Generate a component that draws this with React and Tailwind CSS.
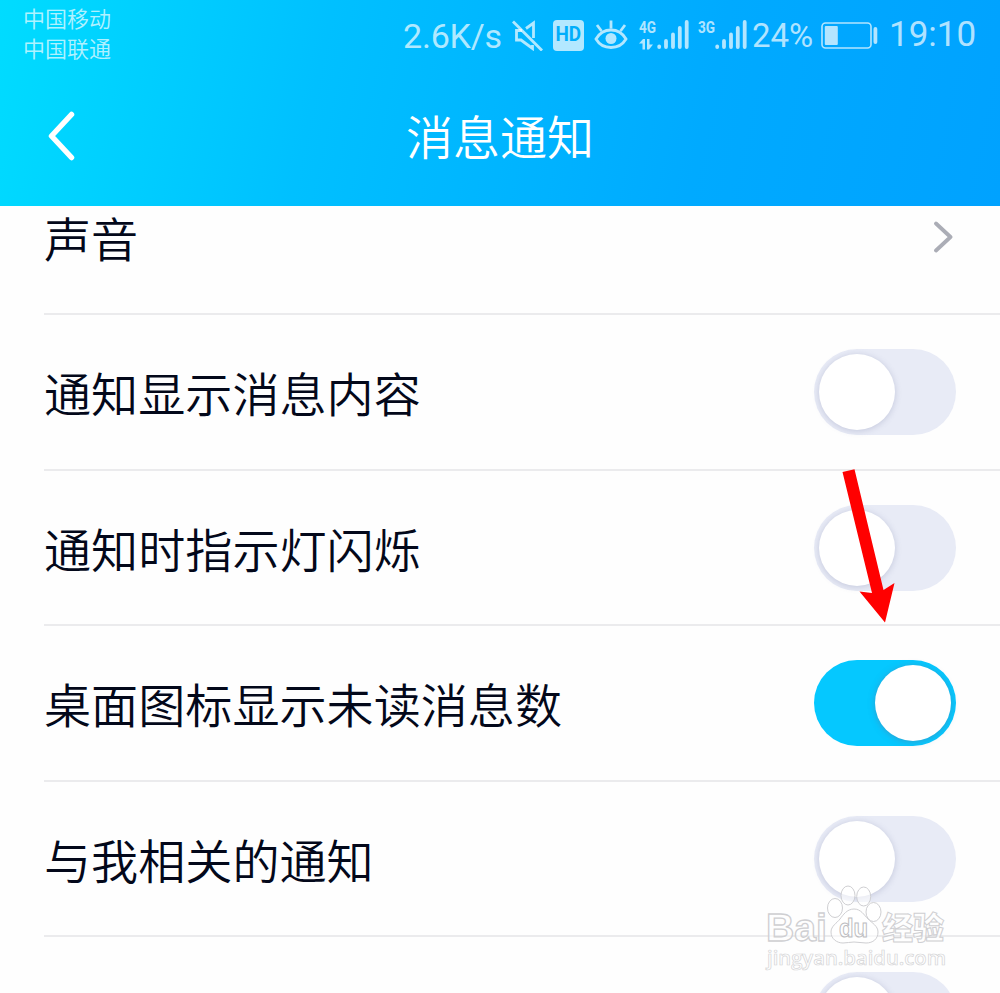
import React, { useState } from 'react';

const CJK = "font-['Noto_Sans_CJK_SC',sans-serif]";

const MutedIcon = () => (
  <svg className="h-8 w-8 shrink-0" viewBox="0 0 32 32" fill="none" stroke="currentColor" strokeWidth="2.8">
    <path d="M11 11.500H5.500V21H10l11.500 8.500V26" />
    <path d="M15 9.500 22.500 4v15" />
    <path d="M2 2.500 31 31.500" />
  </svg>
);

const EyeIcon = () => (
  <svg className="h-8 w-[34px] shrink-0" viewBox="0 0 34 32" fill="none" stroke="currentColor" strokeWidth="2.8">
    <path d="M2 20C5.500 14 11 11 17 11s11.500 3 15 9c-3.500 6-9 8.500-15 8.500s-11.500-2.500-15-8.500Z" />
    <path d="M17 1.500v8M3 6l4.500 6M31 6l-4.500 6" />
    <circle cx="17" cy="19.500" r="5.500" fill="currentColor" stroke="none" />
  </svg>
);

const SignalBars = () => (
  <svg className="h-8 w-8 shrink-0" viewBox="0 0 32 32" fill="none" stroke="currentColor" strokeWidth="3.800" strokeLinecap="round">
    <path d="M2.200 27.500v.6M9 22v6.100M16 15.500v12.600M22.800 9v19.100M29.700 3v25.100" />
  </svg>
);

const DataArrows = () => (
  <svg className="h-3 w-[14px]" viewBox="0 0 14 12" fill="currentColor">
    <path d="M0 4.500 4 0h2V10.500H3.500V4.500ZM8 0h2.500V5.500H14l-4 5H8Z" />
  </svg>
);

const BatteryIcon = () => (
  <svg className="h-[27px] w-[57px] shrink-0" viewBox="0 0 57 27" fill="currentColor">
    <rect x="1" y="1" width="49" height="25" rx="3.500" fill="none" stroke="currentColor" strokeWidth="1.600" />
    <rect x="3.800" y="4" width="13" height="19" rx="1" />
    <rect x="52.500" y="5" width="3.800" height="17" rx="1.900" />
  </svg>
);

const StatusBar = () => (
  <div className="flex h-[72px] items-start text-white/70">
    <div className={`w-[381px] shrink-0 pt-[2px] pl-[23px] text-[22px] leading-[30px] font-[350] ${CJK}`}>
      <div>中国移动</div>
      <div>中国联通</div>
    </div>
    <div className="flex h-[70px] shrink-0 items-center pl-[22px] font-['Roboto',sans-serif] whitespace-nowrap">
      <span className="w-[108px] pt-[2px] text-[34px] tracking-[-0.2px]">2.6K/s</span>
      <MutedIcon />
      <span className="ml-[10px] flex h-[31px] w-[31px] items-center justify-center rounded-[4px] bg-[#b3e8ff] text-[21px] font-bold text-[#00aefb]">
        <span className="scale-x-[0.9]">HD</span>
      </span>
      <span className="ml-[10px] flex"><EyeIcon /></span>
      <span className="ml-[11px] flex h-8 w-[18px] flex-col justify-between">
        <span className="origin-left scale-x-[0.8] text-[17px] leading-[16px] font-bold">4G</span>
        <DataArrows />
      </span>
      <SignalBars />
      <span className="ml-[9px] h-8 w-[17px] origin-left scale-x-[0.8] text-[17px] leading-[16px] font-bold">3G</span>
      <SignalBars />
      <span className="ml-[5px] w-[69px] pt-px text-[33px]">24%</span>
      <BatteryIcon />
      <span className="ml-[11px] pt-px text-[35px]">19:10</span>
    </div>
  </div>
);

const Header = () => (
  <header className="h-[206px] bg-[linear-gradient(102deg,#00dcff_0%,#00c0ff_32%,#00aaff_70%,#00a2ff_100%)]">
    <StatusBar />
    <div className="grid h-[128px] grid-cols-[200px_1fr_200px] items-center text-white">
      <button className="flex pl-12" aria-label="返回">
        <svg className="h-[50px] w-7" viewBox="0 0 28 50" fill="none" stroke="currentColor" strokeWidth="5.500" strokeLinecap="round" strokeLinejoin="round">
          <path d="M23.500 3.500 3.500 25l20 21.500" />
        </svg>
      </button>
      <h1 className={`pb-[3px] text-center text-[47px] leading-none font-[350] ${CJK}`}>消息通知</h1>
    </div>
  </header>
);

const Toggle = ({ on, onClick }) => (
  <button
    role="switch"
    aria-checked={on}
    onClick={onClick}
    className={`mt-px flex h-[86px] w-[142px] shrink-0 items-center rounded-full px-[5px] ${on ? 'justify-end bg-[#05c8ff]' : 'justify-start bg-[#e8ebf6]'}`}
  >
    <span className={`h-[76px] w-[76px] rounded-full bg-white ${on ? 'shadow-[0_1px_6px_rgba(90,120,160,0.5)]' : 'shadow-[0_1px_6px_rgba(110,115,160,0.3)]'}`} />
  </button>
);

const Row = ({ label, children }) => (
  <div className="ml-11 flex h-[155.6px] shrink-0 items-center justify-between border-b-2 border-[#ebebed] pr-11">
    <span className={`text-[47.1px] leading-none font-[350] whitespace-nowrap text-[#03081a] ${CJK}`}>{label}</span>
    {children}
  </div>
);

const Watermark = () => (
  <svg className="pointer-events-none absolute top-[880px] left-[760px] h-[96px] w-[200px]" viewBox="0 0 200 96" fill="#fff" fillOpacity="0.6" stroke="#cfcfd2" strokeWidth="1">
    <g fontFamily="'Liberation Sans',sans-serif" fontWeight="700">
      <text x="6" y="61" fontSize="39" strokeWidth="1.300" textLength="61" lengthAdjust="spacingAndGlyphs">Bai</text>
      <ellipse cx="75" cy="28" rx="7.500" ry="9.500" />
      <ellipse cx="88" cy="15.500" rx="7" ry="9.500" />
      <ellipse cx="103.700" cy="16.500" rx="7" ry="9.500" />
      <ellipse cx="113.500" cy="32" rx="7.500" ry="9.500" />
      <path d="M94 29c-7 0-11 6-14 10s-9 7-9 13c0 7 6 11 12 11 4 0 7-1 11-1s8 1 12 1c7 0 12-4 12-11 0-6-6-9-10-13s-7-10-14-10Z" />
      <text x="79" y="57" fontSize="25" stroke="#bcbcc0" textLength="29" lengthAdjust="spacingAndGlyphs">du</text>
    </g>
    <text x="122" y="59" fontSize="31" fontWeight="900" fontFamily="'Noto Sans CJK SC',sans-serif">经验</text>
    <text x="7" y="85" fontSize="20" fontWeight="600" strokeWidth="0.700" stroke="#d4d4d6" textLength="179" lengthAdjust="spacingAndGlyphs" fontFamily="'Open Sans',sans-serif">jingyan.baidu.com</text>
  </svg>
);

const Pointer = () => (
  <svg className="pointer-events-none absolute top-[468px] left-[838px] h-[156px] w-[60px]" viewBox="0 0 60 156" fill="#ff0000">
    <path d="M4.500 4 16.500 1.200 45.500 122 56.500 115 47 154.500 21.500 123.500 34 125Z" />
  </svg>
);

const switches = [
  { id: 'content', label: '通知显示消息内容', on: false },
  { id: 'light', label: '通知时指示灯闪烁', on: false },
  { id: 'badge', label: '桌面图标显示未读消息数', on: true },
  { id: 'related', label: '与我相关的通知', on: false },
  { id: 'more', label: '', on: false },
];

export default function App() {
  const [items, setItems] = useState(switches);

  const toggle = (id) =>
    setItems(items.map((item) => (item.id === id ? { ...item, on: !item.on } : item)));

  return (
    <div className="relative h-[993px] w-[1000px] overflow-hidden bg-[#fefefe]">
      <Header />
      <main className="h-[787px] overflow-hidden">
        <div className="-mt-[46.6px] flex flex-col">
          <Row label="声音">
            <svg className="mt-px mr-px h-8 w-[22px]" viewBox="0 0 22 32" fill="none" stroke="#abadb6" strokeWidth="3.800" strokeLinecap="round" strokeLinejoin="round">
              <path d="M3 2.500 17.500 16 3 29.500" />
            </svg>
          </Row>
          {items.map((item) => (
            <Row key={item.id} label={item.label}>
              <Toggle on={item.on} onClick={() => toggle(item.id)} />
            </Row>
          ))}
        </div>
      </main>
      <Pointer />
      <Watermark />
    </div>
  );
}
